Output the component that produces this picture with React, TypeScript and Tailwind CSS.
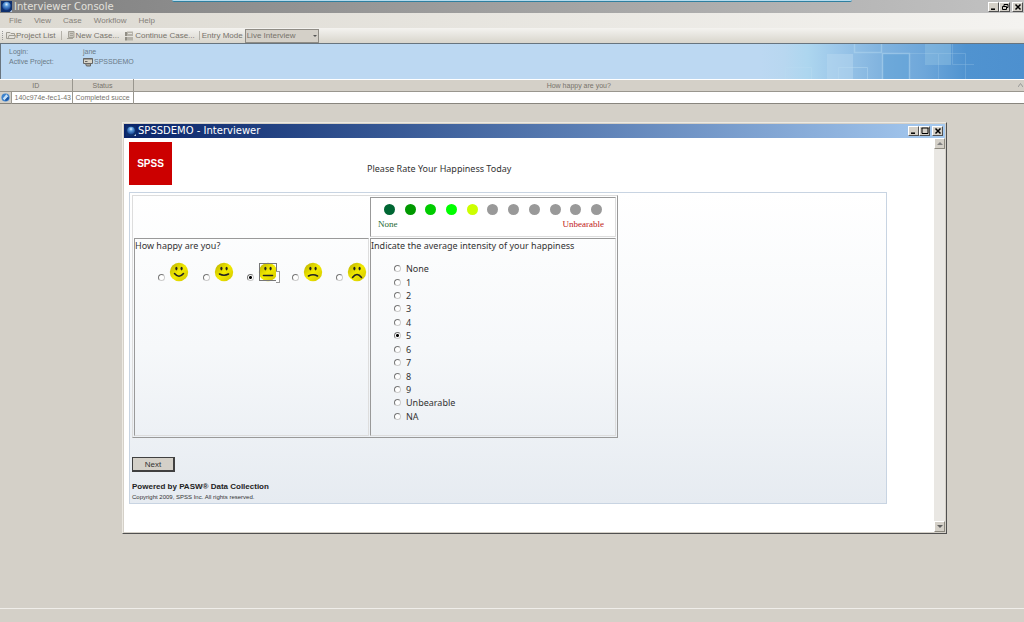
import { useState } from 'react'
import type { ReactNode } from 'react'

const menus = ['File', 'View', 'Case', 'Workflow', 'Help']

const moods = [
    { name: 'Very happy', mouth: 'M5.5 11.5 Q10 17 14.5 11.5' },
    { name: 'Happy', mouth: 'M5.5 12 Q10 14.5 14.5 12' },
    { name: 'Neutral', mouth: 'M5.5 13.5 H14.5' },
    { name: 'Unhappy', mouth: 'M5.5 14 Q10 11.5 14.5 14' },
    { name: 'Very unhappy', mouth: 'M5.5 15.5 Q10 9.5 14.5 15.5' },
]

const ratings = ['None', '1', '2', '3', '4', '5', '6', '7', '8', '9', 'Unbearable', 'NA']

const dots = ['#006633', '#009900', '#00cc00', '#00ff00', '#ccff00', '#999999', '#999999', '#999999', '#999999', '#999999', '#999999']

const radioClass = 'size-[7px] shrink-0 appearance-none rounded-full border border-t-[#777] border-l-[#777] border-r-[#ccc] border-b-[#ccc] bg-white checked:bg-[radial-gradient(circle,#000_0_1px,#fff_2px)]'

function AppIcon({ className }: { className: string }) {
    return (
        <svg viewBox="0 0 12 12" className={className}>
            <defs>
                <radialGradient id="globe" cx="0.5" cy="0.3" r="0.7">
                    <stop offset="0" stopColor="#e4f4ff" />
                    <stop offset="0.35" stopColor="#5b9bdc" />
                    <stop offset="1" stopColor="#123f90" />
                </radialGradient>
            </defs>
            <rect width="12" height="12" fill="#0e2f6c" />
            <circle cx="6" cy="5.5" r="4.6" fill="url(#globe)" />
            <path d="M9.5 12L12 9.5V12Z" fill="#b9cde6" />
        </svg>
    )
}

function CaptionButton({ label, children }: { label: string; children: ReactNode }) {
    return (
        <button
            aria-label={label}
            className="flex h-[10px] w-[11px] items-center justify-center border border-t-white border-l-white border-r-[#505050] border-b-[#505050] bg-[#d4d0c8]"
        >
            <svg viewBox="0 0 8 8" className="size-2" fill="none" stroke="#000">
                {children}
            </svg>
        </button>
    )
}

function Smiley({ mouth }: { mouth: string }) {
    return (
        <svg viewBox="0 0 20 20" className="size-5">
            <defs>
                <linearGradient id="face" x1="0" y1="0" x2="1" y2="1">
                    <stop offset="0" stopColor="#b8ae00" />
                    <stop offset="0.5" stopColor="#f2ea00" />
                    <stop offset="1" stopColor="#d0c400" />
                </linearGradient>
            </defs>
            <circle cx="10" cy="10" r="9.2" fill="url(#face)" />
            <ellipse cx="7.4" cy="6.6" rx="1.1" ry="1.8" fill="#222" />
            <ellipse cx="12.6" cy="6.6" rx="1.1" ry="1.8" fill="#222" />
            <path d={mouth} fill="none" stroke="#222" strokeWidth="1.6" strokeLinecap="round" />
        </svg>
    )
}

function TitleBar() {
    return (
        <header className="relative flex h-[13px] items-center bg-linear-to-r from-[#808080] to-[#c2c2c2] pr-px pl-px">
            <div className="absolute top-0 right-[172px] left-[172px] h-[2px] rounded-b-sm border-b border-[#2f7f9f] bg-[#b4dcee]" />
            <AppIcon className="size-[11px]" />
            <h1 className="ml-[2px] flex-1 font-['DejaVu_Sans'] text-[10px] leading-[13px] text-[#e2e0dc]">Interviewer Console</h1>
            <div className="flex">
                <CaptionButton label="Minimize"><path d="M1 6.2H5" strokeWidth="1.5" /></CaptionButton>
                <CaptionButton label="Restore"><path d="M3 3V1.5H7V4.5H5.5M1.5 3.5H5.5V6.5H1.5Z" /></CaptionButton>
                <span className="w-[2px]" />
                <CaptionButton label="Close"><path d="M1.5 1.5L6.5 6.5M6.5 1.5L1.5 6.5" strokeWidth="1.5" /></CaptionButton>
            </div>
        </header>
    )
}

function Toolbar() {
    return (
        <div className="flex h-[15px] items-center bg-linear-to-b from-[#f4f3f0] to-[#d8d5cc] pl-[2px] text-[8px] text-[#77736b]">
            <span className="mr-[3px] h-[9px] border-l border-dotted border-[#999]" />
            <button className="flex items-center">
                <svg viewBox="0 0 10 9" className="h-[9px] w-[10px]" fill="#e4e2dc" stroke="#a09d94">
                    <path d="M.5 1.5H4L5 2.5H8.5V7.5H.5Z" />
                    <path d="M2 7.5L3 4.5H9.5L8.5 7.5Z" />
                </svg>
                Project List
            </button>
            <span className="mr-[4px] ml-[5px] h-[9px] w-px bg-[#b5b2aa]" />
            <button className="flex items-center gap-px">
                <svg viewBox="0 0 9 9" className="size-[9px]" fill="#c9c6be" stroke="#a5a298">
                    <path d="M2.5 .5H8V6.5H2.5Z" />
                    <path d="M4 2.5H7M4 4.5H7M1 7.5H7" />
                </svg>
                New Case...
            </button>
            <button className="ml-[5px] flex items-center gap-px">
                <svg viewBox="0 0 10 10" className="size-[10px]">
                    <path d="M3 .5H9V9.5H3Z" fill="#b5b2a9" />
                    <path d="M1 1H3V9.5H1Z" fill="#918e85" />
                    <path d="M4 2.5H8M1 5.5H9" stroke="#e4e2dc" />
                </svg>
                Continue Case...
            </button>
            <span className="mr-[2px] ml-[4px] h-[9px] w-px bg-[#b5b2aa]" />
            <label htmlFor="mode">Entry Mode</label>
            <div className="relative ml-[2px]">
                <select id="mode" className="block h-[14px] w-[74px] appearance-none border border-[#8f8c85] bg-[#d4d0c8] pl-px text-[8px] leading-[12px]">
                    <option>Live Interview</option>
                </select>
                <svg viewBox="0 0 4 2" className="pointer-events-none absolute top-[6px] right-[2px] h-[2px] w-1">
                    <path d="M0 0H4L2 2Z" fill="#555" />
                </svg>
            </div>
        </div>
    )
}

function Banner() {
    return (
        <section className="relative flex h-[36px] border-t border-l border-t-[#68747e] border-l-[#68747e] bg-[#bcd8f2]">
            <svg viewBox="0 0 264 35" className="absolute top-0 right-0 h-[35px] w-[264px]">
                <defs>
                    <linearGradient id="sky">
                        <stop offset="0" stopColor="#bcd8f2" />
                        <stop offset="0.09" stopColor="#b8d7f0" />
                        <stop offset="0.18" stopColor="#add6ef" />
                        <stop offset="0.3" stopColor="#9bc6e9" />
                        <stop offset="0.45" stopColor="#82b4df" />
                        <stop offset="0.62" stopColor="#6ea7da" />
                        <stop offset="0.78" stopColor="#5093d0" />
                        <stop offset="1" stopColor="#4d90cf" />
                    </linearGradient>
                </defs>
                <rect width="264" height="35" fill="url(#sky)" />
                <path d="M67 10H93V35H67Z" fill="#b7d8f0" opacity=".5" />
                <path d="M165 0H191V21H165Z" fill="#8dbfe2" opacity=".5" />
                <path d="M123 10H149V35H123Z" fill="#5c9fd6" opacity=".5" />
                <g fill="none" stroke="#b9dcf2" opacity=".45">
                    <path d="M25.5 35V23.5H51.5V35M78.5 35V23.5H107.5V35" />
                    <path d="M94.5 0V8.5H121.5V0M122.5 35V9.5H149.5V35" strokeWidth="1.5" />
                    <path d="M150 9.5H178M178.5 35V9.5H205.5V35M192.5 0V20.5H214" opacity=".5" />
                </g>
            </svg>
            <dl className="relative grid grid-cols-[74px_auto] content-start pt-[3px] pl-2 text-[7px] leading-[10px] text-[#6a7886]">
                <dt>Login:</dt>
                <dd>jane</dd>
                <dt>Active Project:</dt>
                <dd className="flex items-center gap-px">
                    <svg viewBox="0 0 10 10" className="size-[10px]" fill="none" stroke="#666">
                        <path d="M.5 1.5H9.5V6.5H.5Z" fill="#d8d4c8" />
                        <path d="M2.5 6.5H7.5V9H3.5Z" fill="#a9a69c" />
                        <path d="M.5 2H9.5M2 4.5H4.5" />
                    </svg>
                    SPSSDEMO
                </dd>
            </dl>
        </section>
    )
}

function CaseList() {
    return (
        <table className="w-full table-fixed border-collapse text-[7px] text-[#77736b]">
            <colgroup>
                <col className="w-[11px]" />
                <col className="w-[61px]" />
                <col className="w-[61px]" />
                <col />
            </colgroup>
            <thead>
                <tr className="h-[12px] border-t border-b border-t-white border-b-[#99968e] leading-[10px]">
                    <th colSpan={2} className="border-r border-[#99968e] p-0 font-normal">ID</th>
                    <th className="border-r border-[#99968e] p-0 font-normal">Status</th>
                    <th className="relative p-0 font-normal">
                        How happy are you?
                        <svg viewBox="0 0 5 5" className="absolute top-[3px] right-px size-[5px]" fill="none" stroke="#999">
                            <path d="M0 4L2.5 .5L5 4" />
                        </svg>
                    </th>
                </tr>
            </thead>
            <tbody>
                <tr className="h-[12px] border-b border-[#88857e] bg-white leading-[10px]">
                    <td className="border-r border-[#99968e] bg-[#d4d0c8] p-0">
                        <svg viewBox="0 0 10 10" className="ml-px size-[9px]">
                            <circle cx="5" cy="5" r="4.5" fill="#3f83cc" />
                            <path d="M2 6L6 1.5L8 4L4 8Z" fill="#c5e0f8" />
                            <path d="M4 8L8 4L9 6L6 9Z" fill="#1d57a6" />
                        </svg>
                    </td>
                    <td className="overflow-hidden border-r border-[#99968e] p-0 pl-[3px] whitespace-nowrap">140c974e-fec1-43</td>
                    <td className="overflow-hidden border-r border-[#99968e] p-0 pl-[3px] whitespace-nowrap">Completed succe</td>
                    <td className="p-0" />
                </tr>
            </tbody>
        </table>
    )
}

function ScrollBar() {
    const buttonClass = 'flex h-[11px] items-center justify-center border border-t-white border-l-white border-r-[#8c8980] border-b-[#8c8980] bg-[#d4d0c8]'
    return (
        <div className="flex w-[11px] shrink-0 flex-col justify-between bg-[#e9e7e3]">
            <button aria-label="Scroll up" className={buttonClass}>
                <svg viewBox="0 0 6 3" className="h-[3px] w-[6px]"><path d="M0 3H6L3 0Z" fill="#808080" /></svg>
            </button>
            <button aria-label="Scroll down" className={buttonClass}>
                <svg viewBox="0 0 6 3" className="h-[3px] w-[6px]"><path d="M0 0H6L3 3Z" fill="#606060" /></svg>
            </button>
        </div>
    )
}

function Survey() {
    const [mood, setMood] = useState('Neutral')
    const [rating, setRating] = useState('5')
    const cell = 'border border-t-[#999] border-l-[#999] border-r-[#ddd] border-b-[#ddd] p-0 align-top'

    return (
        <form className="mr-[47px] border border-[#c8d4e2] bg-linear-to-b from-white via-[#f6f8fa] to-[#e6ebf1] p-[2px]" onSubmit={(e) => e.preventDefault()}>
            <table className="w-[486px] table-fixed border-separate border-spacing-px border border-t-[#ddd] border-l-[#ddd] border-r-[#999] border-b-[#999] font-['Noto_Sans'] text-[9px] text-[#333]">
                <colgroup>
                    <col className="w-[235px]" />
                    <col />
                </colgroup>
                <tbody>
                    <tr className="h-[40px]">
                        <td className="p-0" />
                        <td className={`${cell} bg-white`}>
                            <div className="flex justify-between px-[13px] pt-[6px]">
                                {dots.map((color, i) => (
                                    <span key={i} className="size-[11px] rounded-full" style={{ backgroundColor: color }} />
                                ))}
                            </div>
                            <div className="flex justify-between pt-[4px] pr-[11px] pl-[7px] font-['Liberation_Serif'] text-[9px] leading-[11px]">
                                <span className="text-[#1f6b33]">None</span>
                                <span className="text-[#c01818]">Unbearable</span>
                            </div>
                        </td>
                    </tr>
                    <tr className="h-[198px]">
                        <td className={cell}>
                            <p className="leading-[14px]">How happy are you?</p>
                            <div className="mt-[9px] ml-[23px] flex w-[223px]">
                                {moods.map((m) => (
                                    <label key={m.name} className="flex flex-1 items-center gap-[4px]">
                                        <input type="radio" name="mood" aria-label={m.name} checked={mood === m.name} onChange={() => setMood(m.name)} className={`${radioClass} mt-[10px]`} />
                                        <span className="relative">
                                            <Smiley mouth={m.mouth} />
                                            {mood === m.name && (
                                                <>
                                                    <span className="absolute inset-px border border-[#777]" />
                                                    <span className="absolute top-[9px] left-[18px] h-[12px] w-[4px] border border-l-0 border-[#999] bg-white" />
                                                </>
                                            )}
                                        </span>
                                    </label>
                                ))}
                            </div>
                        </td>
                        <td className={cell}>
                            <p className="leading-[14px]">Indicate the average intensity of your happiness</p>
                            <div className="mt-[9px] ml-[23px] flex h-[161px] flex-col">
                                {ratings.map((r) => (
                                    <label key={r} className="flex flex-1 items-center gap-[5px] leading-[13px]">
                                        <input type="radio" name="rating" checked={rating === r} onChange={() => setRating(r)} className={radioClass} />
                                        {r}
                                    </label>
                                ))}
                            </div>
                        </td>
                    </tr>
                </tbody>
            </table>
            <button className="mt-[19px] block h-[15px] w-[43px] border border-r-2 border-b-2 border-[#404040] bg-[#d4d0c8] text-[8px] leading-[11px] text-[#333]">Next</button>
            <p className="mt-[9px] font-['Liberation_Sans'] text-[8px] leading-[12px] font-bold text-[#222]">Powered by PASW® Data Collection</p>
            <p className="text-[6px] leading-[8px] text-[#333]">Copyright 2009, SPSS Inc. All rights reserved.</p>
        </form>
    )
}

function InterviewWindow() {
    return (
        <main className="mt-[18px] mr-[77px] ml-[122px] flex flex-col border border-t-[#ece9e2] border-l-[#ece9e2] border-r-[#505050] border-b-[#505050] bg-[#d4d0c8] p-px">
            <div className="flex h-[14px] items-center bg-linear-to-r from-[#0a246a] to-[#a6caf0] pr-[2px] pl-[2px]">
                <AppIcon className="size-[10px]" />
                <h2 className="ml-[2px] flex-1 font-['DejaVu_Sans'] text-[10px] leading-[14px] text-white">SPSSDEMO - Interviewer</h2>
                <CaptionButton label="Minimize"><path d="M1 6.2H5" strokeWidth="1.5" /></CaptionButton>
                <CaptionButton label="Maximize"><path d="M.5 1H7.5M1 1V6.5H7V1" /></CaptionButton>
                <span className="w-[2px]" />
                <CaptionButton label="Close"><path d="M1.5 1.5L6.5 6.5M6.5 1.5L1.5 6.5" strokeWidth="1.5" /></CaptionButton>
            </div>
            <div className="flex bg-white">
                <div className="flex-1 pt-[4px] pb-[28px] pl-[5px]">
                    <div className="mb-[7px] flex items-center">
                        <div className="flex size-[43px] items-center justify-center bg-[#cc0000] text-[10px] font-black text-white">SPSS</div>
                        <h3 className="mt-[10px] ml-[195px] font-['Noto_Sans'] text-[9px] text-[#333]">Please Rate Your Happiness Today</h3>
                    </div>
                    <Survey />
                </div>
                <ScrollBar />
            </div>
        </main>
    )
}

export default function App() {
    return (
        <div className="flex min-h-screen flex-col bg-[#d4d0c8] font-['Liberation_Sans',sans-serif]">
            <TitleBar />
            <nav className="flex h-[15px] items-center gap-[12px] bg-linear-to-r from-[#dcd9d1] to-[#f4f3f0] pl-[9px] text-[8px] text-[#85817a]">
                {menus.map((m) => (
                    <button key={m}>{m}</button>
                ))}
            </nav>
            <Toolbar />
            <Banner />
            <CaseList />
            <InterviewWindow />
            <footer className="mt-auto h-[14px] border-t border-[#f0eeea]" />
        </div>
    )
}
